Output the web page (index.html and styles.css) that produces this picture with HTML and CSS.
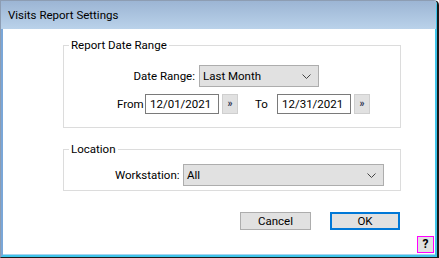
FILE: index.html
```html
<!DOCTYPE html>
<html lang="en">
<head>
  <meta charset="UTF-8">
  <title>Visits Report Settings</title>
  <link rel="stylesheet" href="styles.css">
</head>
<body>
  <div class="window">
    <div class="titlebar">Visits Report Settings</div>
    <div class="client">
      <fieldset class="group group-date">
        <legend>Report Date Range</legend>
        <div class="row row-range">
          <span class="label label-range">Date Range:</span>
          <div class="select select-range">
            <span>Last Month</span>
            <svg width="9" height="5" viewBox="0 0 9 5"><path d="M0.5 0.5 L4.5 4.5 L8.5 0.5" fill="none" stroke="#444" stroke-width="1"/></svg>
          </div>
        </div>
        <div class="row row-dates">
          <span class="label label-from">From</span>
          <div class="input">12/01/2021</div>
          <div class="pick">&raquo;</div>
          <span class="label label-to">To</span>
          <div class="input">12/31/2021</div>
          <div class="pick">&raquo;</div>
        </div>
      </fieldset>

      <fieldset class="group group-location">
        <legend>Location</legend>
        <div class="row row-station">
          <span class="label label-station">Workstation:</span>
          <div class="select select-station">
            <span>All</span>
            <svg width="9" height="5" viewBox="0 0 9 5"><path d="M0.5 0.5 L4.5 4.5 L8.5 0.5" fill="none" stroke="#444" stroke-width="1"/></svg>
          </div>
        </div>
      </fieldset>

      <div class="actions">
        <div class="btn">Cancel</div>
        <div class="btn btn-default">OK</div>
      </div>

      <div class="help-row">
        <div class="help">?</div>
      </div>
    </div>
  </div>
</body>
</html>
```

FILE: styles.css
```css
* {
  margin: 0;
  padding: 0;
  box-sizing: border-box;
}

body {
  font-family: Roboto, 'Liberation Sans', sans-serif;
  font-size: 11.5px;
  color: #000;
  background: #fff;
}

.window {
  width: 439px;
  height: 258px;
  display: flex;
  flex-direction: column;
  border-top: 1px solid #8d9db3;
  border-left: 1px solid #8d9db3;
  border-right: 2px solid #1a1a1a;
  border-bottom: 1px solid #1a1a1a;
  border-top-right-radius: 5px;
  overflow: hidden;
  background: #fff;
}

.titlebar {
  height: 28px;
  line-height: 28px;
  padding-left: 7px;
  font-size: 11.5px;
  color: #000;
  background: linear-gradient(to bottom, #9cb5d4, #bad2ea);
  border-right: 1px solid #3fc4ea;
}

.client {
  flex: 1;
  display: flex;
  flex-direction: column;
  border-left: 2px solid #7aa7d8;
  border-right: 2px solid #3fc4ea;
  border-bottom: 2px solid #3fc4ea;
  box-shadow: inset 0 -1px 0 #a9d4ee;
  padding-left: 60px;
}

.group {
  width: 338px;
  border: 1px solid #dcdcdc;
  padding: 0 5px;
}

.group legend {
  padding: 0 2px;
  line-height: 16px;
}

.group-date {
  margin-top: 8px;
  padding-top: 12px;
  padding-bottom: 13px;
}

.group-location {
  margin-top: 13px;
  padding-top: 7px;
  padding-bottom: 4px;
}

.row {
  display: flex;
  align-items: center;
}

.row-range {
  height: 22px;
}

.row-dates {
  padding-left: 48px;
  margin-top: 7px;
  height: 20px;
}

.row-station {
  padding-left: 46px;
  height: 22px;
}

.label {
  flex: none;
  white-space: nowrap;
}

.label-range {
  width: 126px;
  margin-right: 4px;
  text-align: right;
}

.label-from {
  width: 28px;
}

.label-to {
  width: 22px;
  margin-left: 17px;
}

.label-station {
  width: 68px;
}

.select {
  display: flex;
  align-items: center;
  justify-content: space-between;
  height: 22px;
  background: #e1e1e1;
  border: 1px solid #adadad;
  padding: 0 7px 0 3px;
}

.select svg {
  display: block;
}

.select-range {
  width: 120px;
}

.select-station {
  width: 201px;
}

.input {
  width: 74px;
  height: 20px;
  line-height: 18px;
  border: 1px solid #7a7a7a;
  padding-left: 4px;
  background: #fff;
}

.pick {
  width: 16px;
  height: 20px;
  margin-left: 3px;
  background: #e1e1e1;
  border: 1px solid #cfcfcf;
  color: #1f2a4a;
  font-size: 10px;
  font-weight: bold;
  line-height: 18px;
  text-align: center;
}

.actions {
  display: flex;
  gap: 19px;
  margin-top: 21px;
  padding-left: 177px;
}

.btn {
  width: 71px;
  height: 18px;
  line-height: 16px;
  text-align: center;
  background: #e1e1e1;
  border: 1px solid #adadad;
}

.btn-default {
  width: 70px;
  border: 2px solid #0078d7;
  line-height: 14px;
}

.help-row {
  display: flex;
  justify-content: flex-end;
  margin-top: 6px;
  padding-right: 1px;
}

.help {
  width: 17px;
  height: 17px;
  border: 1px solid #ff00ff;
  background: #e1e1e1;
  font-weight: bold;
  line-height: 15px;
  text-align: center;
  font-size: 12px;
}
```
